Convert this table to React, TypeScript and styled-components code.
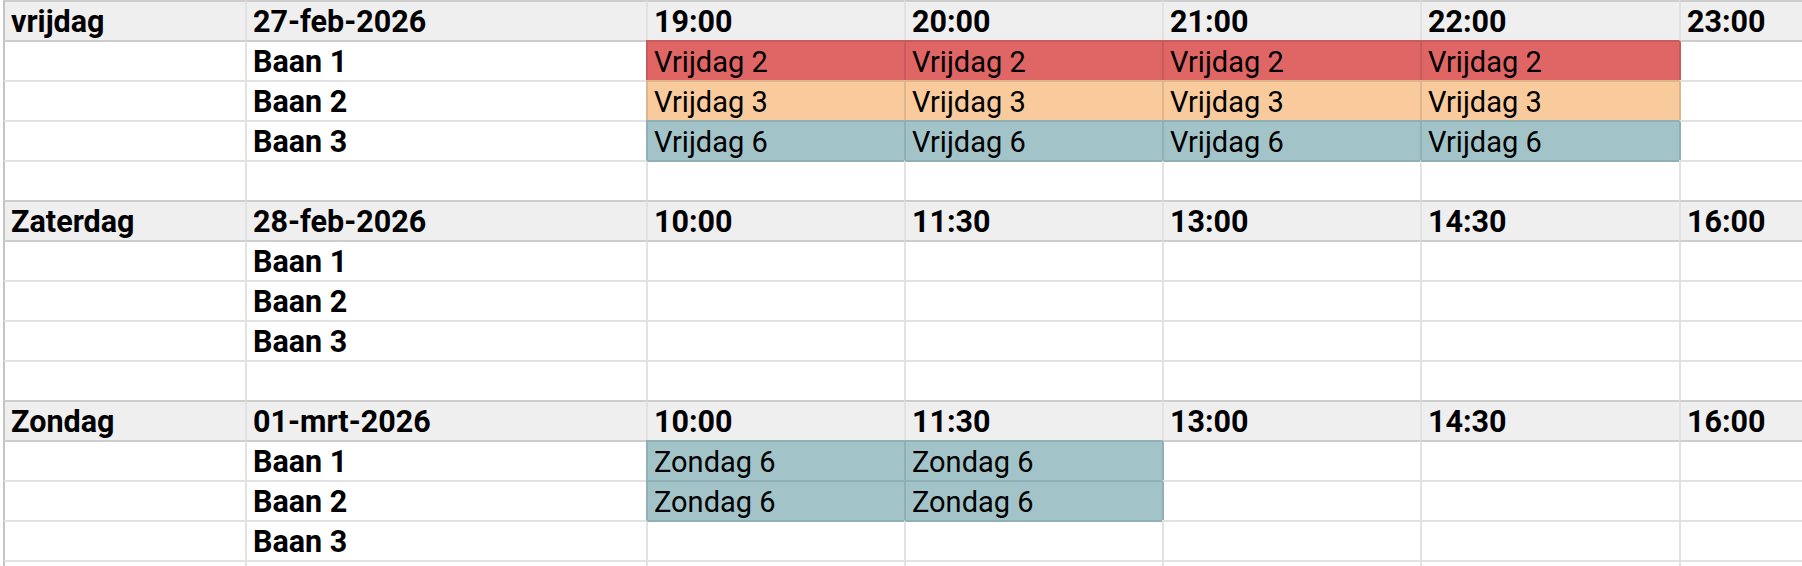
import React from "react";
import styled, { createGlobalStyle } from "styled-components";

type Fill = "red" | "orange" | "teal" | null;

const FILL: Record<string, string> = { red: "#e06666", orange: "#f9cb9c", teal: "#a2c4c9" };
const TINT: Record<string, string> = { red: "#c85c5c", orange: "#dfb68b", teal: "#8fb0b5" };
const GRID = "#e2e2e2";
const HEAD_LINE = "#cdcdcd";
const EDGE = "#c4c4c4";
const HEAD_BG = "#efefef";

const GlobalStyle = createGlobalStyle`
  html, body { margin: 0; padding: 0; background: #ffffff; }
  body { font-family: Roboto, "Liberation Sans", Arial, sans-serif; color: #000; }
`;

const Page = styled.div`
  width: 1802px;
  height: 566px;
  overflow: hidden;
  padding-left: 3px;
  box-sizing: border-box;
  background: #ffffff;
`;

const Sheet = styled.div`
  display: grid;
  grid-template-columns: 242px 401px 258px 258px 258px 259px 1fr;
  grid-auto-rows: 40px;
  width: 100%;
`;

const Cell = styled.div<{
  $bold: boolean;
  $bg: string;
  $left: string;
  $top: string;
}>`
  box-sizing: border-box;
  height: 40px;
  min-width: 0;
  border-top: 2px solid ${(p) => p.$top};
  border-left: 2px solid ${(p) => p.$left};
  background: ${(p) => p.$bg};
  padding: 0 0 1px 6px;
  display: flex;
  align-items: flex-end;
  font-family: Roboto, "Liberation Sans", Arial, sans-serif;
  font-size: ${(p) => (p.$bold ? "30.5px" : "29px")};
  font-weight: ${(p) => (p.$bold ? 700 : 400)};
  line-height: normal;
  white-space: nowrap;
  overflow: hidden;
`;

interface CellData {
  text: string;
  fill: Fill;
  bold: boolean;
}
interface RowData {
  header: boolean;
  cells: CellData[];
}

const blankRow = (): RowData => ({
  header: false,
  cells: Array.from({ length: 7 }, () => ({ text: "", fill: null, bold: false })),
});

const headerRow = (day: string, date: string, times: string[]): RowData => ({
  header: true,
  cells: [day, date, ...times].map((t) => ({ text: t, fill: null, bold: true })),
});

const laneRow = (lane: string, booking: string, fill: Fill, count: number): RowData => ({
  header: false,
  cells: [
    { text: "", fill: null, bold: false },
    { text: lane, fill: null, bold: true },
    ...Array.from({ length: 5 }, (_, i) =>
      i < count ? { text: booking, fill, bold: false } : { text: "", fill: null, bold: false }
    ),
  ],
});

const rows: RowData[] = [
  headerRow("vrijdag", "27-feb-2026", ["19:00", "20:00", "21:00", "22:00", "23:00"]),
  laneRow("Baan 1", "Vrijdag 2", "red", 4),
  laneRow("Baan 2", "Vrijdag 3", "orange", 4),
  laneRow("Baan 3", "Vrijdag 6", "teal", 4),
  blankRow(),
  headerRow("Zaterdag", "28-feb-2026", ["10:00", "11:30", "13:00", "14:30", "16:00"]),
  laneRow("Baan 1", "", null, 0),
  laneRow("Baan 2", "", null, 0),
  laneRow("Baan 3", "", null, 0),
  blankRow(),
  headerRow("Zondag", "01-mrt-2026", ["10:00", "11:30", "13:00", "14:30", "16:00"]),
  laneRow("Baan 1", "Zondag 6", "teal", 2),
  laneRow("Baan 2", "Zondag 6", "teal", 2),
  laneRow("Baan 3", "", null, 0),
  blankRow(),
];

function topColor(r: number, c: number): string {
  const cell = rows[r].cells[c];
  if (cell.fill) return TINT[cell.fill];
  const above = r > 0 ? rows[r - 1] : null;
  if (above && above.cells[c].fill) return TINT[above.cells[c].fill as string];
  if (r === 0 || rows[r].header || (above && above.header)) return HEAD_LINE;
  return GRID;
}

function leftColor(r: number, c: number): string {
  const cell = rows[r].cells[c];
  if (cell.fill) return TINT[cell.fill];
  const prev = c > 0 ? rows[r].cells[c - 1] : null;
  if (prev && prev.fill) return TINT[prev.fill];
  if (c === 0) return EDGE;
  return GRID;
}

export default function App() {
  return (
    <>
      <GlobalStyle />
      <Page>
        <Sheet>
          {rows.map((row, r) =>
            row.cells.map((cell, c) => (
              <Cell
                key={`${r}-${c}`}
                $bold={cell.bold}
                $bg={cell.fill ? FILL[cell.fill] : row.header ? HEAD_BG : "#ffffff"}
                $left={leftColor(r, c)}
                $top={topColor(r, c)}
              >
                {cell.text}
              </Cell>
            ))
          )}
        </Sheet>
      </Page>
    </>
  );
}
